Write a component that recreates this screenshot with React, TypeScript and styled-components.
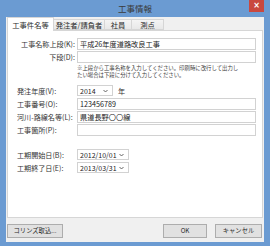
import React from "react";
import styled, { createGlobalStyle } from "styled-components";

const GlobalStyle = createGlobalStyle`
  html, body {
    margin: 0;
    padding: 0;
    width: 270px;
    height: 246px;
    overflow: hidden;
  }
  * {
    box-sizing: border-box;
  }
`;

const Frame = styled.div`
  width: 270px;
  height: 246px;
  display: flex;
  flex-direction: column;
  padding: 0 6px 4px 6px;
  background-color: #6b9bd2;
  font-family: "Noto Sans CJK JP", "Noto Sans", sans-serif;
  color: #333;
`;

const TitleBar = styled.div`
  height: 17px;
  display: grid;
  grid-template-columns: 1fr auto 1fr;
  align-items: start;
`;

const Title = styled.div`
  grid-column: 2;
  font-size: 8.5px;
  line-height: 17px;
  color: #3a3a3a;
`;

const CloseButton = styled.div`
  grid-column: 3;
  justify-self: end;
  width: 15px;
  height: 12px;
  background-color: #c9483f;
  color: #fff;
  font-size: 8px;
  font-weight: bold;
  line-height: 11px;
  text-align: center;
  font-family: "DejaVu Sans", sans-serif;
`;

const Client = styled.div`
  flex: 1;
  display: flex;
  flex-direction: column;
  padding: 0 1px;
  background-color: #f0f0f0;
`;

const TabBar = styled.div`
  height: 13px;
  display: flex;
  align-items: flex-end;
`;

const Tab = styled.div<{ $active?: boolean; $w: number }>`
  width: ${(p) => p.$w}px;
  height: ${(p) => (p.$active ? 14 : 11)}px;
  margin-bottom: ${(p) => (p.$active ? -1 : 0)}px;
  margin-left: -1px;
  position: relative;
  z-index: ${(p) => (p.$active ? 2 : 1)};
  display: flex;
  align-items: center;
  justify-content: center;
  font-size: 7.3px;
  color: #2a2a2a;
  border: 1px solid #d6d6d6;
  border-bottom: ${(p) => (p.$active ? "none" : "1px solid #d6d6d6")};
  background: ${(p) =>
    p.$active ? "#ffffff" : "linear-gradient(#f4f4f4, #e8e8e8)"};
  &:first-child {
    margin-left: 0;
  }
`;

const Panel = styled.div`
  flex: 1;
  display: flex;
  flex-direction: column;
  padding: 7px 6px 0 9px;
  background-color: #fff;
  border: 1px solid #d6d6d6;
  position: relative;
  z-index: 1;
`;

const Row = styled.div<{ $top?: number }>`
  display: flex;
  align-items: center;
  margin-top: ${(p) => p.$top ?? 1}px;
`;

const Label = styled.div<{ $right?: boolean }>`
  width: 58px;
  margin-right: 2px;
  flex-shrink: 0;
  font-size: 7.1px;
  white-space: nowrap;
  text-align: ${(p) => (p.$right ? "right" : "left")};
  color: #333;
`;

const TextBox = styled.div`
  flex: 1;
  height: 12px;
  border: 1px solid #d2d2d2;
  padding: 0 2px;
  font-size: 7.2px;
  line-height: 10px;
  white-space: nowrap;
  overflow: hidden;
  color: #222;
  background-color: #fff;
`;

const Note = styled.div`
  margin-left: 60px;
  margin-top: 2px;
  font-size: 5.4px;
  line-height: 7px;
  color: #3c3c3c;
  white-space: nowrap;
`;

const Combo = styled.div<{ $w: number }>`
  width: ${(p) => p.$w}px;
  height: 11px;
  display: flex;
  align-items: center;
  justify-content: space-between;
  padding: 0 4px 0 2px;
  border: 1px solid #d2d2d2;
  font-size: 7px;
  color: #222;
  background-color: #fff;
`;

const Unit = styled.span`
  margin-left: 5px;
  font-size: 7.1px;
`;

const Footer = styled.div`
  height: 24px;
  display: flex;
  align-items: center;
  justify-content: space-between;
  padding: 1px 1px 0 0;
`;

const ButtonGroup = styled.div`
  display: flex;
  gap: 8px;
`;

const Button = styled.div<{ $w: number }>`
  width: ${(p) => p.$w}px;
  height: 14px;
  display: flex;
  align-items: center;
  justify-content: center;
  border: 1px solid #adadad;
  background-color: #e1e1e1;
  font-size: 6.3px;
  color: #2a2a2a;
`;

const Chevron = () => (
  <svg width="5" height="4" viewBox="0 0 5 4">
    <path d="M0.5 1 L2.5 3 L4.5 1" fill="none" stroke="#555" strokeWidth="0.9" />
  </svg>
);

const App: React.FC = () => {
  return (
    <Frame>
      <GlobalStyle />
      <TitleBar>
        <Title>工事情報</Title>
        <CloseButton>×</CloseButton>
      </TitleBar>
      <Client>
        <TabBar>
          <Tab $active $w={47}>
            工事件名等
          </Tab>
          <Tab $w={52}>発注者/請負者</Tab>
          <Tab $w={28}>社員</Tab>
          <Tab $w={33}>測点</Tab>
        </TabBar>
        <Panel>
          <Row $top={0}>
            <Label $right>工事名称上段(K):</Label>
            <TextBox>平成26年度道路改良工事</TextBox>
          </Row>
          <Row>
            <Label $right>下段(D):</Label>
            <TextBox />
          </Row>
          <Note>
            ※上段から工事名称を入力してください。印刷時に改行して出力し
            <br />
            たい場合は下段に分けて入力してください。
          </Note>
          <Row $top={6}>
            <Label>発注年度(V):</Label>
            <Combo $w={36}>
              2014
              <Chevron />
            </Combo>
            <Unit>年</Unit>
          </Row>
          <Row $top={2}>
            <Label>工事番号(O):</Label>
            <TextBox>123456789</TextBox>
          </Row>
          <Row>
            <Label>河川-路線名等(L):</Label>
            <TextBox>県道長野〇〇線</TextBox>
          </Row>
          <Row>
            <Label>工事箇所(P):</Label>
            <TextBox />
          </Row>
          <Row $top={13}>
            <Label>工期開始日(B):</Label>
            <Combo $w={52}>
              2012/10/01
              <Chevron />
            </Combo>
          </Row>
          <Row $top={2}>
            <Label>工期終了日(E):</Label>
            <Combo $w={52}>
              2013/03/31
              <Chevron />
            </Combo>
          </Row>
        </Panel>
        <Footer>
          <Button $w={56}>コリンズ取込...</Button>
          <ButtonGroup>
            <Button $w={44}>OK</Button>
            <Button $w={47}>キャンセル</Button>
          </ButtonGroup>
        </Footer>
      </Client>
    </Frame>
  );
};

export default App;
